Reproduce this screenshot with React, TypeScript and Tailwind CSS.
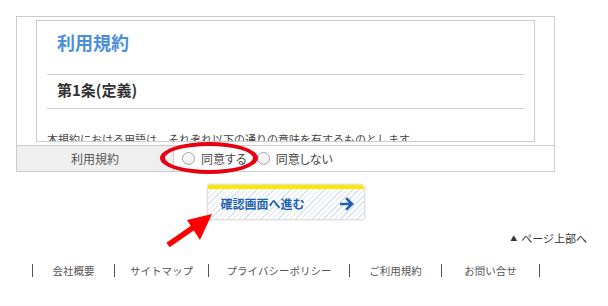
const footerLinks = [
  { label: "会社概要", w: "w-[82px]" },
  { label: "サイトマップ", w: "w-[94px]" },
  { label: "プライバシーポリシー", w: "w-[141px]" },
  { label: "ご利用規約", w: "w-[92px]" },
  { label: "お問い合せ", w: "w-[99px]" },
];

function Radio({ label }: { label: string }) {
  return (
    <label className="flex items-center gap-[6px] text-[12px] text-[#444] [font-feature-settings:'palt']">
      <span className="w-[13px] h-[13px] rounded-full border border-[#a5a5a5] bg-[linear-gradient(#ffffff,#ececec)]" />
      {label}
    </label>
  );
}

export default function App() {
  return (
    <div className="relative w-[608px] h-[306px] bg-white overflow-hidden font-['Noto_Sans_CJK_JP','Noto_Sans',sans-serif]">
      <div className="pt-4 pl-4">
        {/* form box */}
        <div className="w-[539px] border border-[#cccccc]">
          <div className="px-[19px] py-[3px]">
            <div className="h-[122px] border border-[#cccccc] overflow-hidden px-[10px]">
              <div className="pl-[10px] pt-[9px] pb-[20px] border-b border-[#cccccc] text-[18px] leading-[24px] font-bold text-[#4a90d9]">
                利用規約
              </div>
              <div className="pl-[10px] pt-[5px] pb-[8px] border-b border-[#cccccc] text-[15px] leading-[20px] font-bold text-[#333]">
                第1条(定義)
              </div>
              <p className="mt-[21px] text-[11px] leading-[18px] text-[#444] whitespace-nowrap">
                本規約における用語は、それぞれ以下の通りの意味を有するものとします。
              </p>
            </div>
          </div>
          <div className="flex h-[26px] border-t border-[#cccccc]">
            <div className="w-[157px] bg-[#efefef] border-r border-[#cccccc] flex items-center justify-center text-[12px] text-[#555]">
              利用規約
            </div>
            <div className="flex items-center pl-[8px] gap-[10px]">
              <Radio label="同意する" />
              <Radio label="同意しない" />
            </div>
          </div>
        </div>

        {/* submit */}
        <div className="w-[539px] flex justify-center mt-[13px]">
          <button className="w-[156px] h-[34px] border-t-4 border-[#ffe800] rounded-tr-[3px] shadow-[0_0_3px_rgba(0,0,0,0.35)] bg-[repeating-linear-gradient(-45deg,#d6e3f1_0px,#d6e3f1_1px,#ffffff_1px,#ffffff_4px)] flex items-center justify-between pl-[13px] pr-[10px]">
            <span className="text-[12px] font-bold text-[#1f63b0]">確認画面へ進む</span>
            <svg width="14" height="14" viewBox="0 0 14 14" fill="none">
              <path d="M1 7H12M7 2L12 7L7 12" stroke="#1f63b0" strokeWidth="2.6" strokeLinecap="square" />
            </svg>
          </button>
        </div>
      </div>

      {/* page top */}
      <div className="flex justify-end pr-[21px] mt-[11px] text-[11px] leading-[16px] text-[#333]">
        <span className="flex items-center gap-[4px]">
          <span className="text-[7px]">▲</span>
          ページ上部へ
        </span>
      </div>

      {/* footer */}
      <div className="flex pl-[32px] mt-[18px]">
        {footerLinks.map((l, i) => (
          <div
            key={l.label}
            className={`${l.w} h-[13px] border-l border-[#555] flex items-center justify-center text-[10.5px] text-[#555] ${i === footerLinks.length - 1 ? "border-r" : ""}`}
          >
            {l.label}
          </div>
        ))}
      </div>

      {/* annotations */}
      <div className="absolute left-[160px] top-[142px] w-[98px] h-[32px] rounded-[50%] border-y-[4px] border-x-[5px] border-[#e60012]" />
      <svg className="absolute left-[160px] top-[205px]" width="56" height="46" viewBox="0 0 56 46">
        <path d="M8 40L34 22" stroke="#ff0000" strokeWidth="5.5" />
        <path d="M52 9L27 15L40 35Z" fill="#ff0000" />
      </svg>
    </div>
  );
}
